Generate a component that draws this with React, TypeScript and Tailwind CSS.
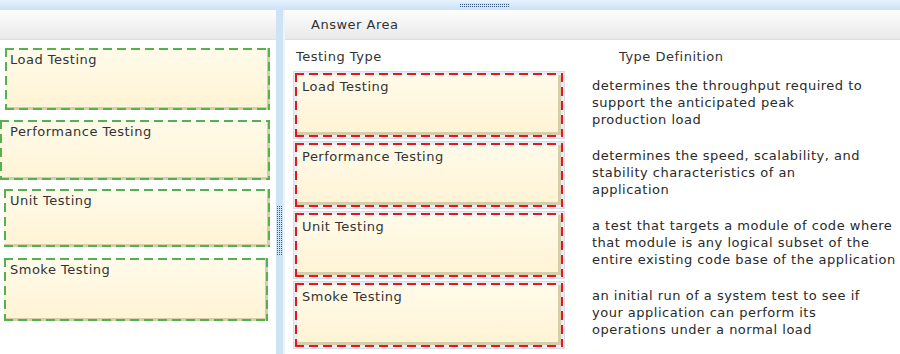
const leftItems = [
  { label: 'Load Testing', cls: 'ml-[5px] w-[265px] h-[62px] mt-[8px]', pad: 'pl-[5px]' },
  { label: 'Performance Testing', cls: 'ml-0 w-[270px] h-[60px] mt-[10px]', pad: 'pl-[10px]' },
  { label: 'Unit Testing', cls: 'ml-[4px] w-[266px] h-[58px] mt-[9px]', pad: 'pl-[6px]' },
  { label: 'Smoke Testing', cls: 'ml-[4px] w-[264px] h-[63px] mt-[11px]', pad: 'pl-[6px]' },
]

const rows = [
  {
    label: 'Load Testing',
    def: ['determines the throughput required to', 'support the anticipated peak', 'production load'],
  },
  {
    label: 'Performance Testing',
    def: ['determines the speed, scalability, and', 'stability characteristics of an', 'application'],
  },
  {
    label: 'Unit Testing',
    def: [
      'a test that targets a module of code where',
      'that module is any logical subset of the',
      'entire existing code base of the application',
    ],
  },
  {
    label: 'Smoke Testing',
    def: ['an initial run of a system test to see if', 'your application can perform its', 'operations under a normal load'],
  },
]

const grip =
  '[background:repeating-linear-gradient(90deg,transparent_0_1px,#cfe3f7_1px_2px),repeating-linear-gradient(0deg,#3a5a85_0_1px,#cfe3f7_1px_2px)]'

// dashed outline drawn over a card (css dashes are too short)
function Dashes({ color }: { color: string }) {
  return (
    <svg className="absolute inset-0 w-full h-full pointer-events-none overflow-hidden">
      <g stroke={color} strokeWidth="4" strokeDasharray="9 5" fill="none">
        <line x1="0" y1="0" x2="100%" y2="0" />
        <line x1="0" y1="100%" x2="100%" y2="100%" />
        <line x1="0" y1="0" x2="0" y2="100%" />
        <line x1="100%" y1="0" x2="100%" y2="100%" />
      </g>
    </svg>
  )
}

function Card({ label, pad = 'pl-[5px]' }: { label: string; pad?: string }) {
  return (
    <div
      className={`h-full w-full bg-[linear-gradient(#fffbea,#fff3d4)] shadow-[inset_-3px_-3px_0_#d8cdab] ${pad} pt-[3px] text-[13px] tracking-[0.5px] leading-[18px] text-[#333]`}
    >
      {label}
    </div>
  )
}

export default function App() {
  return (
    <div className="w-[900px] h-[354px] overflow-hidden bg-white flex flex-col font-['DejaVu_Sans',sans-serif] text-[#333]">
      {/* top splitter */}
      <div className="h-[10px] shrink-0 bg-[linear-gradient(#e6f1fc,#cbe2f8)] flex items-center">
        <div className={`ml-[460px] w-[50px] h-[4px] ${grip}`} />
      </div>

      <div className="flex-1 flex">
        {/* left pane */}
        <div className="w-[276px] flex flex-col">
          <div className="h-[30px] shrink-0 bg-[linear-gradient(#fdfdfd,#e9e9e9)] border-b border-[#dedede]" />
          {leftItems.map((it) => (
            <div key={it.label} className={`relative ${it.cls}`}>
              <Card label={it.label} pad={it.pad} />
              <Dashes color="#55b04f" />
            </div>
          ))}
        </div>

        {/* vertical splitter */}
        <div className="w-[7px] bg-[#cfe3f7] flex justify-center">
          <div className={`mt-[195px] w-[6px] h-[50px] ${grip}`} />
        </div>

        {/* right pane */}
        <div className="flex-1 flex flex-col border-l-2 border-[#eef4fa]">
          <div className="h-[30px] shrink-0 bg-[linear-gradient(#fdfdfd,#e9e9e9)] border-b border-[#dedede] pl-[26px] text-[13px] tracking-[0.5px] leading-[30px] text-[#333]">
            Answer Area
          </div>
          <div className="flex mt-[8px] text-[13px] tracking-[0.5px] leading-[18px]">
            <div className="pl-[11px] w-[334px]">Testing Type</div>
            <div>Type Definition</div>
          </div>
          <div className="flex flex-col gap-[2px] mt-[5px]">
            {rows.map((r) => (
              <div key={r.label} className="flex h-[68px]">
                <div className="ml-[8px] w-[272px] bg-[#e6edf5] p-[2px] shadow-[inset_0_0_0_1px_#d3dde8]">
                  <div className="relative h-full p-[2px]">
                    <Card label={r.label} />
                    <Dashes color="#e8151b" />
                  </div>
                </div>
                <div className="ml-[27px] pt-[6px] text-[13px] tracking-[0.5px] leading-[17px] text-[#2a2a2a] whitespace-nowrap">
                  {r.def.map((l) => (
                    <div key={l}>{l}</div>
                  ))}
                </div>
              </div>
            ))}
          </div>
        </div>
      </div>
    </div>
  )
}
